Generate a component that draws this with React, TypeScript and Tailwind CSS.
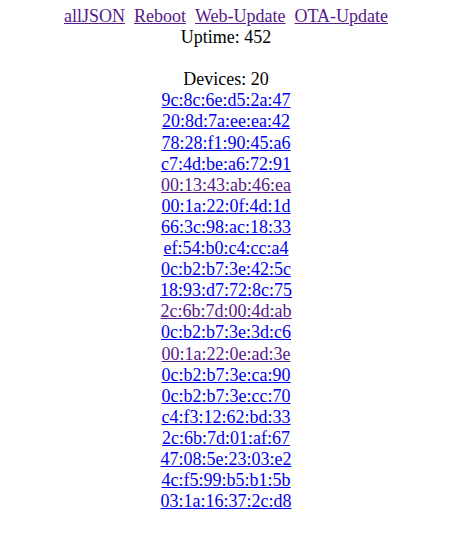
const devices: { mac: string; visited?: boolean }[] = [
  { mac: "9c:8c:6e:d5:2a:47" },
  { mac: "20:8d:7a:ee:ea:42" },
  { mac: "78:28:f1:90:45:a6" },
  { mac: "c7:4d:be:a6:72:91" },
  { mac: "00:13:43:ab:46:ea", visited: true },
  { mac: "00:1a:22:0f:4d:1d" },
  { mac: "66:3c:98:ac:18:33" },
  { mac: "ef:54:b0:c4:cc:a4" },
  { mac: "0c:b2:b7:3e:42:5c" },
  { mac: "18:93:d7:72:8c:75" },
  { mac: "2c:6b:7d:00:4d:ab", visited: true },
  { mac: "0c:b2:b7:3e:3d:c6" },
  { mac: "00:1a:22:0e:ad:3e", visited: true },
  { mac: "0c:b2:b7:3e:ca:90" },
  { mac: "0c:b2:b7:3e:cc:70" },
  { mac: "c4:f3:12:62:bd:33" },
  { mac: "2c:6b:7d:01:af:67" },
  { mac: "47:08:5e:23:03:e2" },
  { mac: "4c:f5:99:b5:b1:5b" },
  { mac: "03:1a:16:37:2c:d8" },
]

const menu = ["allJSON", "Reboot", "Web-Update", "OTA-Update"]

export default function App() {
  return (
    <div className="min-h-[546px] bg-white pt-[6px] pr-[20px] text-center text-[18px] leading-[21.1px] text-black [font-family:'Liberation_Serif','Times_New_Roman',serif]">
      <div className="flex justify-center gap-[9px]">
        { menu.map((m) => (
          <a key={ m } href="#" className="text-[#551a8b] underline">{ m }</a>
        )) }
      </div>
      <div>Uptime: 452</div>
      <br />
      <div>Devices: 20</div>
      { devices.map((d) => (
        <div key={ d.mac }>
          <a
            href="#"
            className={`underline ${ d.visited ? "text-[#551a8b]" : "text-[#0000ee]" }`}>
            { d.mac }
          </a>
        </div>
      )) }
    </div>
  )
}
